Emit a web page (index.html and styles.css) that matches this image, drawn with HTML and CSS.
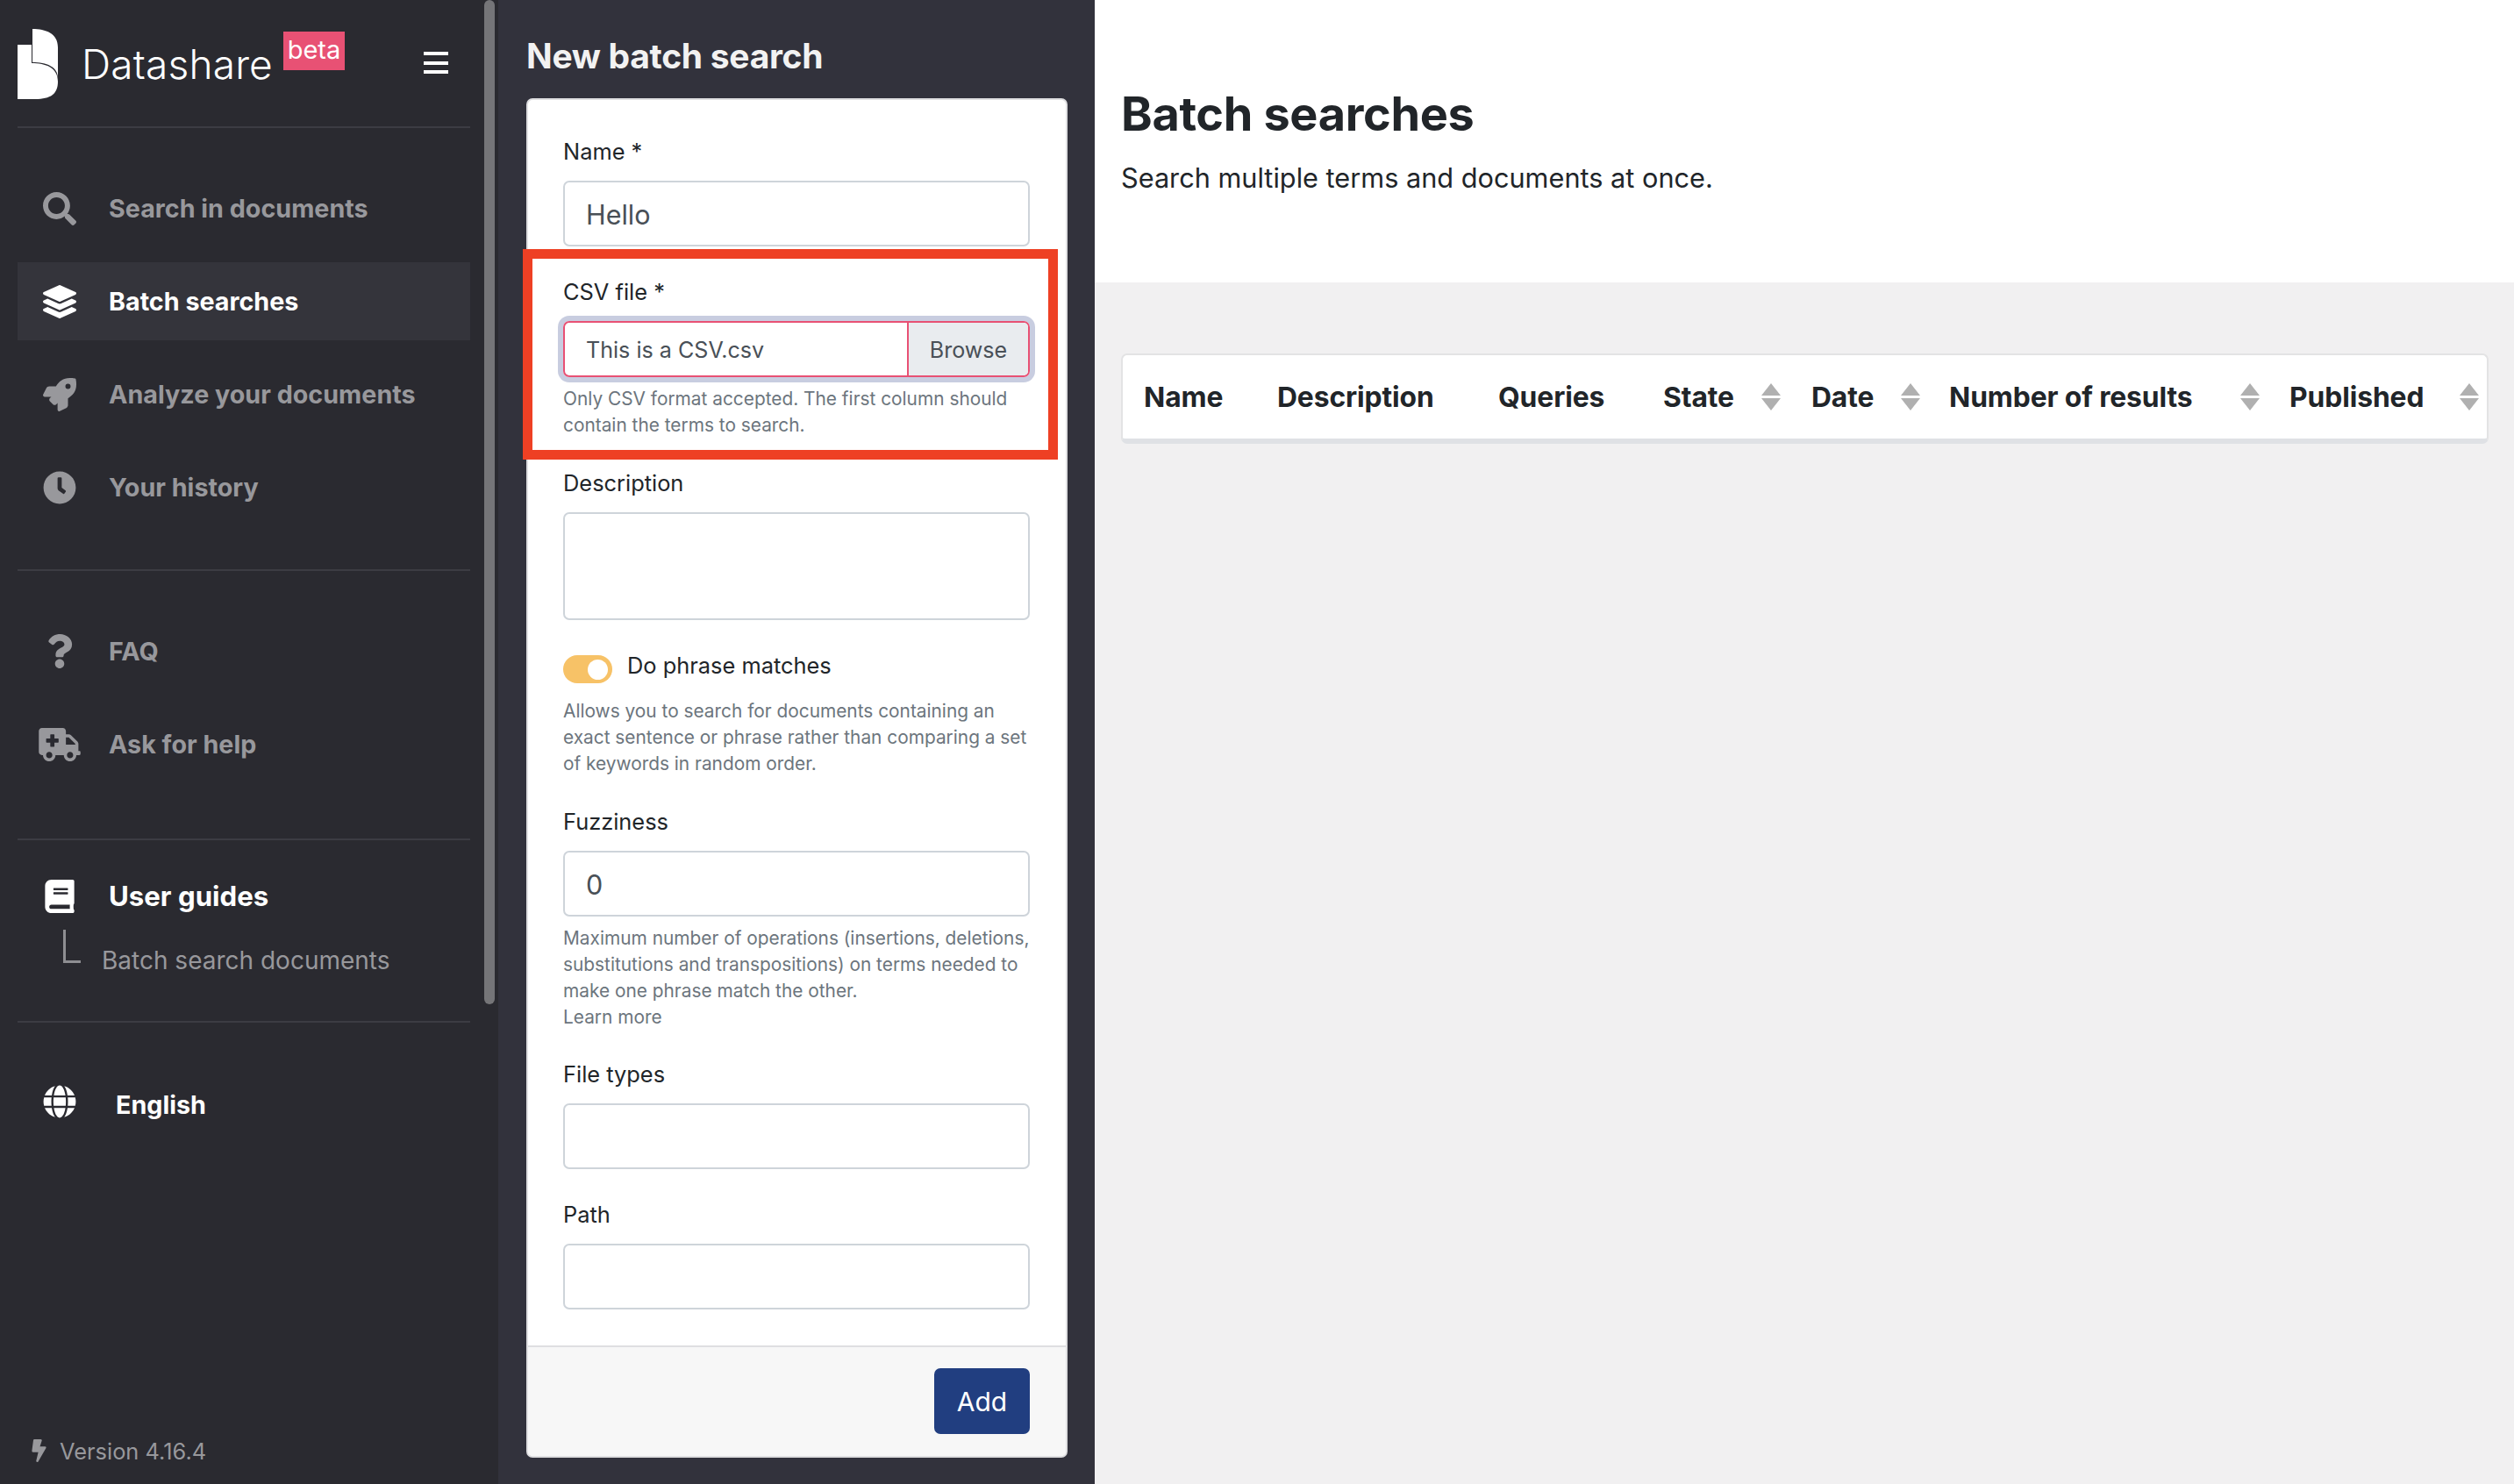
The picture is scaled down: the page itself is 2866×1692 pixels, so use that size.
FILE: index.html
```html
<!DOCTYPE html>
<html lang="en">
<head>
<meta charset="utf-8">
<title>Batch searches - Datashare</title>
<link rel="stylesheet" href="styles.css">
</head>
<body>
<div class="app">
  <aside class="sidebar">
    <div class="scrollbar"></div>
    <div class="brand">
      <svg class="logo" viewBox="0 0 46 80"><path fill="#fff" d="M17 0C32 0 46 5 46 21V56C46 43 33 38 17 38Z"/><path fill="#fff" d="M0 18H16V39C32 39 46 44 46 60C46 74 38 80 20 80H0Z"/></svg>
      <span class="wordmark">Datashare</span>
      <span class="badge">beta</span>
      <span class="burger"><i></i><i></i><i></i></span>
    </div>
    <hr class="rule">
    <nav class="nav nav-main">
      <a class="nav-item">
        <span class="nav-icon"><svg class="ic-38" viewBox="0 0 512 512"><path d="M505 442.7L405.3 343c-4.5-4.5-10.6-7-17-7H372c27.6-35.3 44-79.7 44-128C416 93.1 322.9 0 208 0S0 93.1 0 208s93.1 208 208 208c48.3 0 92.7-16.4 128-44v16.3c0 6.4 2.5 12.5 7 17l99.7 99.7c9.4 9.4 24.6 9.4 33.9 0l28.3-28.3c9.4-9.4 9.4-24.6.1-34zM208 336c-70.7 0-128-57.2-128-128 0-70.7 57.2-128 128-128 70.7 0 128 57.2 128 128 0 70.7-57.2 128-128 128z"/></svg></span>
        <span>Search in documents</span>
      </a>
      <a class="nav-item is-active">
        <span class="nav-icon"><svg class="ic-38" viewBox="0 0 512 512"><path d="M12.41 148.02l232.94 105.67c6.8 3.09 14.49 3.09 21.29 0l232.94-105.67c16.55-7.51 16.55-32.52 0-40.03L266.65 2.31a25.607 25.607 0 0 0-21.29 0L12.41 107.98c-16.55 7.51-16.55 32.53 0 40.04zm487.18 88.28l-58.09-26.33-161.64 73.27c-7.56 3.43-15.59 5.17-23.86 5.17s-16.29-1.74-23.86-5.17L70.51 209.97l-58.1 26.33c-16.55 7.5-16.55 32.5 0 40l232.94 105.59c6.8 3.08 14.49 3.08 21.29 0L499.59 276.3c16.55-7.5 16.55-32.5 0-40zm0 127.8l-57.87-26.23-161.86 73.37c-7.56 3.43-15.59 5.17-23.86 5.17s-16.29-1.74-23.86-5.17L70.29 337.87 12.41 364.1c-16.55 7.5-16.55 32.5 0 40l232.94 105.59c6.8 3.08 14.49 3.08 21.29 0L499.59 404.1c16.55-7.5 16.55-32.5 0-40z"/></svg></span>
        <span>Batch searches</span>
      </a>
      <a class="nav-item">
        <span class="nav-icon"><svg class="ic-38" viewBox="0 0 512 512"><path d="M505.12 19.09c-1.19-5.53-6.66-11-12.21-12.18C460.72 0 435.51 0 410.41 0 307.18 0 245.27 55.2 199.05 128H94.84c-16.35.02-35.56 11.88-42.89 26.48L2.52 253.3A28.4 28.4 0 0 0 0 264a24 24 0 0 0 24 24h103.82l-22.47 22.47c-11.37 11.36-13 32.26 0 45.25l50.9 50.91c11.16 11.18 32.16 13.15 45.28 0L224 384.16V488a24 24 0 0 0 24 24 28.56 28.56 0 0 0 10.71-2.52l98.73-49.39c14.63-7.3 26.51-26.5 26.51-42.86V312.8c72.6-46.31 128.03-108.41 128.03-211.1.1-25.2.1-50.4-6.86-82.61zM384.04 168a40 40 0 1 1 40.01-40 40.02 40.02 0 0 1-40.01 40z"/></svg></span>
        <span>Analyze your documents</span>
      </a>
      <a class="nav-item">
        <span class="nav-icon"><svg class="ic-38" viewBox="0 0 512 512"><path d="M256 8C119 8 8 119 8 256s111 248 248 248 248-111 248-248S393 8 256 8zm92.49 313l-20 25a16 16 0 0 1-22.49 2.5l-67-49.72a40 40 0 0 1-15-31.23V112a16 16 0 0 1 16-16h32a16 16 0 0 1 16 16v144l58 42.5a16 16 0 0 1 2.49 22.5z"/></svg></span>
        <span>Your history</span>
      </a>
    </nav>
    <hr class="rule rule-2">
    <nav class="nav nav-help">
      <a class="nav-item">
        <span class="nav-icon"><svg class="ic-q" viewBox="0 0 384 512"><path d="M202.021 0C122.202 0 70.503 32.703 29.914 91.026c-7.363 10.58-5.093 25.086 5.178 32.874l43.138 32.709c10.373 7.865 25.132 6.026 33.253-4.148 25.049-31.381 43.63-49.449 82.757-49.449 30.764 0 68.816 19.799 68.816 49.631 0 22.552-18.617 34.134-48.993 51.164-35.423 19.86-82.299 44.576-82.299 106.405V320c0 13.255 10.745 24 24 24h72.471c13.255 0 24-10.745 24-24v-5.773c0-42.86 125.268-44.645 125.268-160.627C377.504 66.256 286.902 0 202.021 0zM192 373.459c-38.196 0-69.271 31.075-69.271 69.271 0 38.195 31.075 69.27 69.271 69.27s69.271-31.075 69.271-69.271-31.075-69.27-69.271-69.27z"/></svg></span>
        <span>FAQ</span>
      </a>
      <a class="nav-item">
        <span class="nav-icon"><svg class="ic-amb" viewBox="0 0 640 512"><path d="M624 352h-16V243.9c0-12.7-5.1-24.9-14.1-33.9L494 110.1c-9-9-21.2-14.1-33.9-14.1H416V48c0-26.5-21.5-48-48-48H48C21.5 0 0 21.5 0 48v320c0 26.5 21.5 48 48 48h16c0 53 43 96 96 96s96-43 96-96h128c0 53 43 96 96 96s96-43 96-96h48c8.8 0 16-7.2 16-16v-32c0-8.8-7.2-16-16-16zM160 464c-26.5 0-48-21.5-48-48s21.5-48 48-48 48 21.5 48 48-21.5 48-48 48zm144-248c0 4.4-3.6 8-8 8h-56v56c0 4.4-3.6 8-8 8h-48c-4.4 0-8-3.6-8-8v-56h-56c-4.4 0-8-3.6-8-8v-48c0-4.4 3.6-8 8-8h56v-56c0-4.4 3.6-8 8-8h48c4.4 0 8 3.6 8 8v56h56c4.4 0 8 3.6 8 8v48zm176 248c-26.5 0-48-21.5-48-48s21.5-48 48-48 48 21.5 48 48-21.5 48-48 48zm80-208H416V144h44.1l99.9 99.9V256z"/></svg></span>
        <span>Ask for help</span>
      </a>
    </nav>
    <hr class="rule rule-3">
    <div class="guides">
      <div class="guides-head">
        <span class="nav-icon"><svg class="ic-book" viewBox="0 0 448 512"><path d="M448 360V24c0-13.3-10.7-24-24-24H96C43 0 0 43 0 96v320c0 53 43 96 96 96h328c13.3 0 24-10.7 24-24v-16c0-7.5-3.5-14.3-8.9-18.7-4.2-15.4-4.2-59.3 0-74.7 5.4-4.3 8.9-11.1 8.9-18.6zM128 134c0-3.3 2.7-6 6-6h212c3.3 0 6 2.7 6 6v20c0 3.3-2.7 6-6 6H134c-3.3 0-6-2.7-6-6v-20zm0 64c0-3.3 2.7-6 6-6h212c3.3 0 6 2.7 6 6v20c0 3.3-2.7 6-6 6H134c-3.3 0-6-2.7-6-6v-20zm253.4 250H96c-17.7 0-32-14.3-32-32 0-17.6 14.4-32 32-32h285.4c-1.9 17.1-1.9 46.9 0 64z"/></svg></span>
        <span>User guides</span>
      </div>
      <div class="guides-sub">
        <span class="elbow"></span>
        <span>Batch search documents</span>
      </div>
    </div>
    <hr class="rule rule-4">
    <div class="lang">
      <span class="nav-icon"><svg class="ic-38" viewBox="0 0 496 512"><path d="M336.5 160C322 70.7 287.8 8 248 8s-74 62.7-88.5 152h177zM152 256c0 22.2 1.2 43.5 3.3 64h185.3c2.1-20.5 3.3-41.8 3.3-64s-1.2-43.5-3.3-64H155.3c-2.1 20.5-3.3 41.8-3.3 64zm324.7-96c-28.6-67.9-86.5-120.4-158-141.6 24.4 33.8 41.2 84.7 50 141.6h108zM177.2 18.4C105.8 39.6 47.8 92.1 19.3 160h108c8.7-56.9 25.5-107.8 49.9-141.6zM487.4 192H372.7c2.1 21 3.3 42.5 3.3 64s-1.2 43-3.3 64h114.6c5.5-20.5 8.6-41.8 8.6-64s-3.1-43.5-8.5-64zM120 256c0-21.5 1.2-43 3.3-64H8.6C3.2 212.5 0 233.8 0 256s3.2 43.5 8.6 64h114.6c-2-21-3.2-42.5-3.2-64zm39.5 96c14.5 89.3 48.7 152 88.5 152s74-62.7 88.5-152h-177zm159.3 141.6c71.4-21.2 129.4-73.7 158-141.6h-108c-8.8 56.9-25.6 107.8-50 141.6zM19.3 352c28.6 67.9 86.5 120.4 158 141.6-24.4-33.8-41.2-84.7-50-141.6h-108z"/></svg></span>
      <span class="lang-label">English</span>
    </div>
    <div class="version">
      <svg class="ic-bolt" viewBox="0 0 320 512"><path d="M296 160H180.6l42.6-129.8C227.2 15 215.7 0 200 0H56C44 0 33.8 8.9 32.2 20.8l-32 240C-1.7 275.2 9.5 288 24 288h118.7L96.6 482.5c-3.6 15.2 8 29.5 23.3 29.5 8.4 0 16.4-4.4 20.8-12l176-304c9.3-15.9-2.2-36-20.7-36z"/></svg>
      <span>Version 4.16.4</span>
    </div>
  </aside>

  <section class="panel">
    <h2 class="panel-title">New batch search</h2>
    <form class="card">
      <div class="highlight"></div>
      <div class="card-body">
        <div class="group">
          <div class="label">Name *</div>
          <div class="field">Hello</div>
        </div>
        <div class="group group-csv">
          <div class="label">CSV file *</div>
          <div class="file">
            <span class="file-name">This is a CSV.csv</span>
            <span class="file-btn">Browse</span>
          </div>
          <div class="help">Only CSV format accepted. The first column should contain the terms to search.</div>
        </div>
        <div class="group">
          <div class="label">Description</div>
          <div class="field field-area"></div>
        </div>
        <div class="group group-toggle">
          <div class="toggle-row">
            <span class="toggle"><span class="knob"></span></span>
            <span class="toggle-label">Do phrase matches</span>
          </div>
          <div class="help help-toggle">Allows you to search for documents containing an exact sentence or phrase rather than comparing a set of keywords in random order.</div>
        </div>
        <div class="group group-fuzzy">
          <div class="label">Fuzziness</div>
          <div class="field">0</div>
          <div class="help">Maximum number of operations (insertions, deletions, substitutions and transpositions) on terms needed to make one phrase match the other.<br>Learn more</div>
        </div>
        <div class="group">
          <div class="label">File types</div>
          <div class="field"></div>
        </div>
        <div class="group group-last">
          <div class="label">Path</div>
          <div class="field"></div>
        </div>
      </div>
      <div class="card-footer">
        <button class="btn-add" type="button">Add</button>
      </div>
    </form>
  </section>

  <main class="content">
    <header class="page-head">
      <h1 class="page-title">Batch searches</h1>
      <p class="page-sub">Search multiple terms and documents at once.</p>
    </header>
    <div class="page-body">
      <div class="table-card">
        <div class="th">Name</div>
        <div class="th">Description</div>
        <div class="th">Queries</div>
        <div class="th th-state">State<svg class="sort" viewBox="0 0 22 31"><path d="M11 0L22 14H0Z"/><path d="M0 17H22L11 31Z"/></svg></div>
        <div class="th th-date">Date<svg class="sort" viewBox="0 0 22 31"><path d="M11 0L22 14H0Z"/><path d="M0 17H22L11 31Z"/></svg></div>
        <div class="th th-num">Number of results<svg class="sort" viewBox="0 0 22 31"><path d="M11 0L22 14H0Z"/><path d="M0 17H22L11 31Z"/></svg></div>
        <div class="th th-pub">Published<svg class="sort" viewBox="0 0 22 31"><path d="M11 0L22 14H0Z"/><path d="M0 17H22L11 31Z"/></svg></div>
      </div>
    </div>
  </main>
</div>
</body>
</html>
```

FILE: styles.css
```css
* { box-sizing: border-box; }
html, body { margin: 0; padding: 0; height: 100%; }
body { font-family: Inter, "Liberation Sans", sans-serif; color: #212529; overflow: hidden; }
.app { display: flex; height: 1692px; width: 2866px; }

/* Sidebar */
.sidebar { position: relative; width: 568px; flex: none; background: #2a2a30; padding: 0 32px 0 20px; display: flex; flex-direction: column; color: #98989c; font-size: 28.7px; font-weight: 700; }
.scrollbar { position: absolute; left: 552px; top: 0; width: 12px; height: 1145px; border-radius: 6px; background: #757578; }
.brand { height: 144px; display: flex; align-items: flex-start; position: relative; }
.logo { width: 46px; height: 80px; margin-top: 33px; flex: none; }
.wordmark { margin: 48px 0 0 27px; font-size: 46px; line-height: 50px; font-weight: 300; color: #fff; letter-spacing: 0.2px; }
.badge { margin: 36px 0 0 12px; width: 70px; height: 44px; background: #e85174; color: #fff; font-size: 29px; font-weight: 400; line-height: 42px; text-align: center; }
.burger { margin: 59px 0 0 90px; width: 28px; height: 25px; display: flex; flex-direction: column; justify-content: space-between; }
.burger i { display: block; height: 4px; background: #fff; }
.rule { margin: 0; border: 0; height: 2px; background: #3c3c43; flex: none; }
.nav { display: flex; flex-direction: column; gap: 17px; }
.nav-main { margin-top: 47px; }
.nav-help { margin-top: 47px; }
.rule-2 { margin-top: 49px; }
.rule-3 { margin-top: 63px; }
.rule-4 { margin-top: 0; }
.nav-item { height: 89px; display: flex; align-items: center; }
.nav-item.is-active { background: #34343b; color: #fff; }
.nav-icon { width: 96px; margin-right: 8px; flex: none; display: flex; justify-content: center; fill: currentColor; }
.nav-icon svg { display: block; }
.ic-38 { width: 38px; height: 38px; }
.ic-q { width: 30px; height: 39px; }
.ic-amb { width: 48px; height: 38px; }
.ic-book { width: 34px; height: 38px; }
.ic-bolt { width: 17px; height: 26px; fill: currentColor; flex: none; margin-right: 15px; }
.guides { height: 206px; padding-top: 44px; }
.guides-head { display: flex; align-items: center; height: 40px; color: #fff; font-size: 31.2px; }
.guides-sub { position: relative; display: flex; padding-left: 96px; height: 40px; align-items: center; font-size: 28px; font-weight: 400; margin-top: 33px; }
.elbow { position: absolute; left: 52px; top: -15px; width: 20px; height: 38px; border-left: 3px solid #8e8e92; border-bottom: 3px solid #8e8e92; }
.lang { display: flex; align-items: center; margin-top: 71px; height: 44px; color: #fff; }
.lang .nav-icon { margin-right: 16px; margin-top: -6px; }
.lang-label { font-size: 28.7px; }
.version { margin-top: auto; margin-bottom: 21px; padding-left: 16px; display: flex; align-items: center; height: 34px; font-size: 25.4px; font-weight: 400; }

/* New batch search panel */
.panel { width: 680px; flex: none; background: #32323c; padding: 0 30px 0 32px; }
.panel-title { margin: 0; height: 112px; padding-top: 40px; font-size: 39px; line-height: 48px; font-weight: 700; color: #f2f2f2; letter-spacing: -0.3px; }
.card { position: relative; display: flex; flex-direction: column; width: 617px; height: 1550px; background: #fff; border: 2px solid #dfdfe1; border-radius: 7px; }
.card-body { flex: 1; padding: 38px 41px 0 40px; }
.group { margin-bottom: 31px; }
.group-csv { margin-bottom: 30px; }
.group-toggle { margin-top: 40px; margin-bottom: 30px; }
.group-fuzzy { margin-bottom: 29px; }
.group-last { margin-bottom: 0; }
.label { font-size: 25.4px; line-height: 40px; padding-top: 1px; height: 41px; margin-bottom: 13px; color: #212529; }
.field { height: 75px; border: 2px solid #ced4da; border-radius: 7px; padding: 0 24px; font-size: 30.5px; line-height: 73px; color: #495057; }
.field-area { height: 123px; }
.file { display: flex; height: 64px; border: 2px solid #e85174; border-radius: 7px; box-shadow: 0 0 0 6px #c8cde0; font-size: 25.1px; line-height: 63px; color: #495057; }
.file-name { flex: 1; padding-left: 24px; }
.file-btn { width: 138px; flex: none; text-align: center; background: #e9ecef; border-left: 2px solid #e85174; border-radius: 0 5px 5px 0; }
.help { margin-top: 10px; font-size: 20.85px; line-height: 30px; color: #6c757d; }
.toggle-row { display: flex; align-items: flex-start; }
.toggle { display: flex; justify-content: flex-end; align-items: center; width: 56px; height: 32px; padding-right: 5px; background: #f7c267; border-radius: 16px; flex: none; }
.knob { width: 23px; height: 23px; background: #fff; border-radius: 50%; }
.toggle-label { margin: -8px 0 0 17px; font-size: 25.4px; line-height: 40px; }
.help-toggle { margin-top: 17px; }
.card-footer { height: 126px; flex: none; padding: 24px 41px 0 0; display: flex; justify-content: flex-end; align-items: flex-start; background: #f7f7f7; border-top: 2px solid #dfdfe1; border-radius: 0 0 5px 5px; }
.btn-add { width: 109px; height: 75px; border: 0; border-radius: 7px; background: #213e80; color: #fff; font-family: inherit; font-size: 30px; padding: 0; }
.highlight { position: absolute; left: -6px; top: 170px; width: 610px; height: 240px; border: 11px solid #ee4024; z-index: 2; pointer-events: none; }

/* Main content */
.content { flex: 1; background: #f1f0f1; display: flex; flex-direction: column; }
.page-head { height: 322px; background: #fff; padding: 92px 0 0 30px; }
.page-title { margin: 0; font-size: 54px; line-height: 76px; font-weight: 700; color: #212529; letter-spacing: -0.35px; }
.page-sub { margin: 13px 0 0; font-size: 30.7px; line-height: 44px; color: #212529; }
.page-body { padding: 81px 29px 0 30px; }
.table-card { display: grid; grid-template-columns: 152px 252px 188px 169px 157px 388px 1fr; align-items: center; height: 103px; padding-left: 24px; background: #fff; border: 2px solid #e3e3e4; border-bottom: 6px solid #dfe1e5; border-radius: 7px; }
.th { display: flex; align-items: center; font-size: 31.8px; font-weight: 700; color: #212529; white-space: nowrap; letter-spacing: -0.1px; }
.sort { width: 22px; height: 31px; fill: #b0b0b0; flex: none; }
.th-state .sort { margin-left: 31px; }
.th-date .sort { margin-left: 31px; }
.th-num .sort { margin-left: 54px; }
.th-pub .sort { margin-left: 41px; }
```
